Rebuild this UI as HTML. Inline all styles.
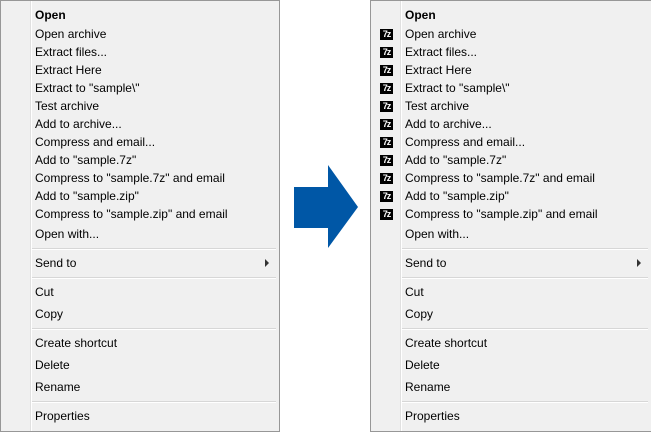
<!DOCTYPE html>
<html><head><style>
body{margin:0;width:651px;height:430px;background:#fff;position:relative;overflow:hidden;font-family:"Liberation Sans",sans-serif;font-size:12px;color:#000}
.m{position:absolute;top:0;width:280px;height:432px;background:#f0f0f0;border:1px solid #979797;box-sizing:border-box}
.m .v{position:absolute;left:29px;top:0;bottom:0;width:1px;background:#e0e0e0;border-right:1px solid #fff}
.t{position:absolute;left:34px;line-height:14px;white-space:nowrap}
.s{position:absolute;left:31px;right:3px;height:1px;background:#d7d7d7;border-bottom:1px solid #fff}
.i{position:absolute;left:9px;width:13px;height:11px;background:#000;color:#fff;font:bold 9px/11px "Liberation Sans",sans-serif;text-align:center;letter-spacing:-1px}
.a{position:absolute;right:10px;top:258px;width:0;height:0;border-left:4px solid #333;border-top:4px solid transparent;border-bottom:4px solid transparent}
</style></head><body>
<div class="m" style="left:0"><div class="v"></div>
<div class="t" style="top:7px;font-weight:bold">Open</div>
<div class="t" style="top:26px">Open archive</div>
<div class="t" style="top:44px">Extract files...</div>
<div class="t" style="top:62px">Extract Here</div>
<div class="t" style="top:80px">Extract to "sample\"</div>
<div class="t" style="top:98px">Test archive</div>
<div class="t" style="top:116px">Add to archive...</div>
<div class="t" style="top:134px">Compress and email...</div>
<div class="t" style="top:152px">Add to "sample.7z"</div>
<div class="t" style="top:170px">Compress to "sample.7z" and email</div>
<div class="t" style="top:188px">Add to "sample.zip"</div>
<div class="t" style="top:206px">Compress to "sample.zip" and email</div>
<div class="t" style="top:226px">Open with...</div>
<div class="s" style="top:247px"></div>
<div class="t" style="top:255px">Send to</div><div class="a"></div>
<div class="s" style="top:276px"></div>
<div class="t" style="top:284px">Cut</div>
<div class="t" style="top:306px">Copy</div>
<div class="s" style="top:327px"></div>
<div class="t" style="top:335px">Create shortcut</div>
<div class="t" style="top:357px">Delete</div>
<div class="t" style="top:379px">Rename</div>
<div class="s" style="top:400px"></div>
<div class="t" style="top:408px">Properties</div>
</div>

<svg style="position:absolute;left:0;top:0" width="651" height="430"><polygon points="294,187 328,187 328,165 358,207 328,248 328,228 294,228" fill="#0057a6"/></svg>

<div class="m" style="left:370px;width:282px"><div class="v"></div>
<div class="t" style="top:7px;font-weight:bold">Open</div>
<div class="i" style="top:28px">7z</div><div class="t" style="top:26px">Open archive</div>
<div class="i" style="top:46px">7z</div><div class="t" style="top:44px">Extract files...</div>
<div class="i" style="top:64px">7z</div><div class="t" style="top:62px">Extract Here</div>
<div class="i" style="top:82px">7z</div><div class="t" style="top:80px">Extract to "sample\"</div>
<div class="i" style="top:100px">7z</div><div class="t" style="top:98px">Test archive</div>
<div class="i" style="top:118px">7z</div><div class="t" style="top:116px">Add to archive...</div>
<div class="i" style="top:136px">7z</div><div class="t" style="top:134px">Compress and email...</div>
<div class="i" style="top:154px">7z</div><div class="t" style="top:152px">Add to "sample.7z"</div>
<div class="i" style="top:172px">7z</div><div class="t" style="top:170px">Compress to "sample.7z" and email</div>
<div class="i" style="top:190px">7z</div><div class="t" style="top:188px">Add to "sample.zip"</div>
<div class="i" style="top:208px">7z</div><div class="t" style="top:206px">Compress to "sample.zip" and email</div>
<div class="t" style="top:226px">Open with...</div>
<div class="s" style="top:247px"></div>
<div class="t" style="top:255px">Send to</div><div class="a"></div>
<div class="s" style="top:276px"></div>
<div class="t" style="top:284px">Cut</div>
<div class="t" style="top:306px">Copy</div>
<div class="s" style="top:327px"></div>
<div class="t" style="top:335px">Create shortcut</div>
<div class="t" style="top:357px">Delete</div>
<div class="t" style="top:379px">Rename</div>
<div class="s" style="top:400px"></div>
<div class="t" style="top:408px">Properties</div>
</div>
</body></html>
